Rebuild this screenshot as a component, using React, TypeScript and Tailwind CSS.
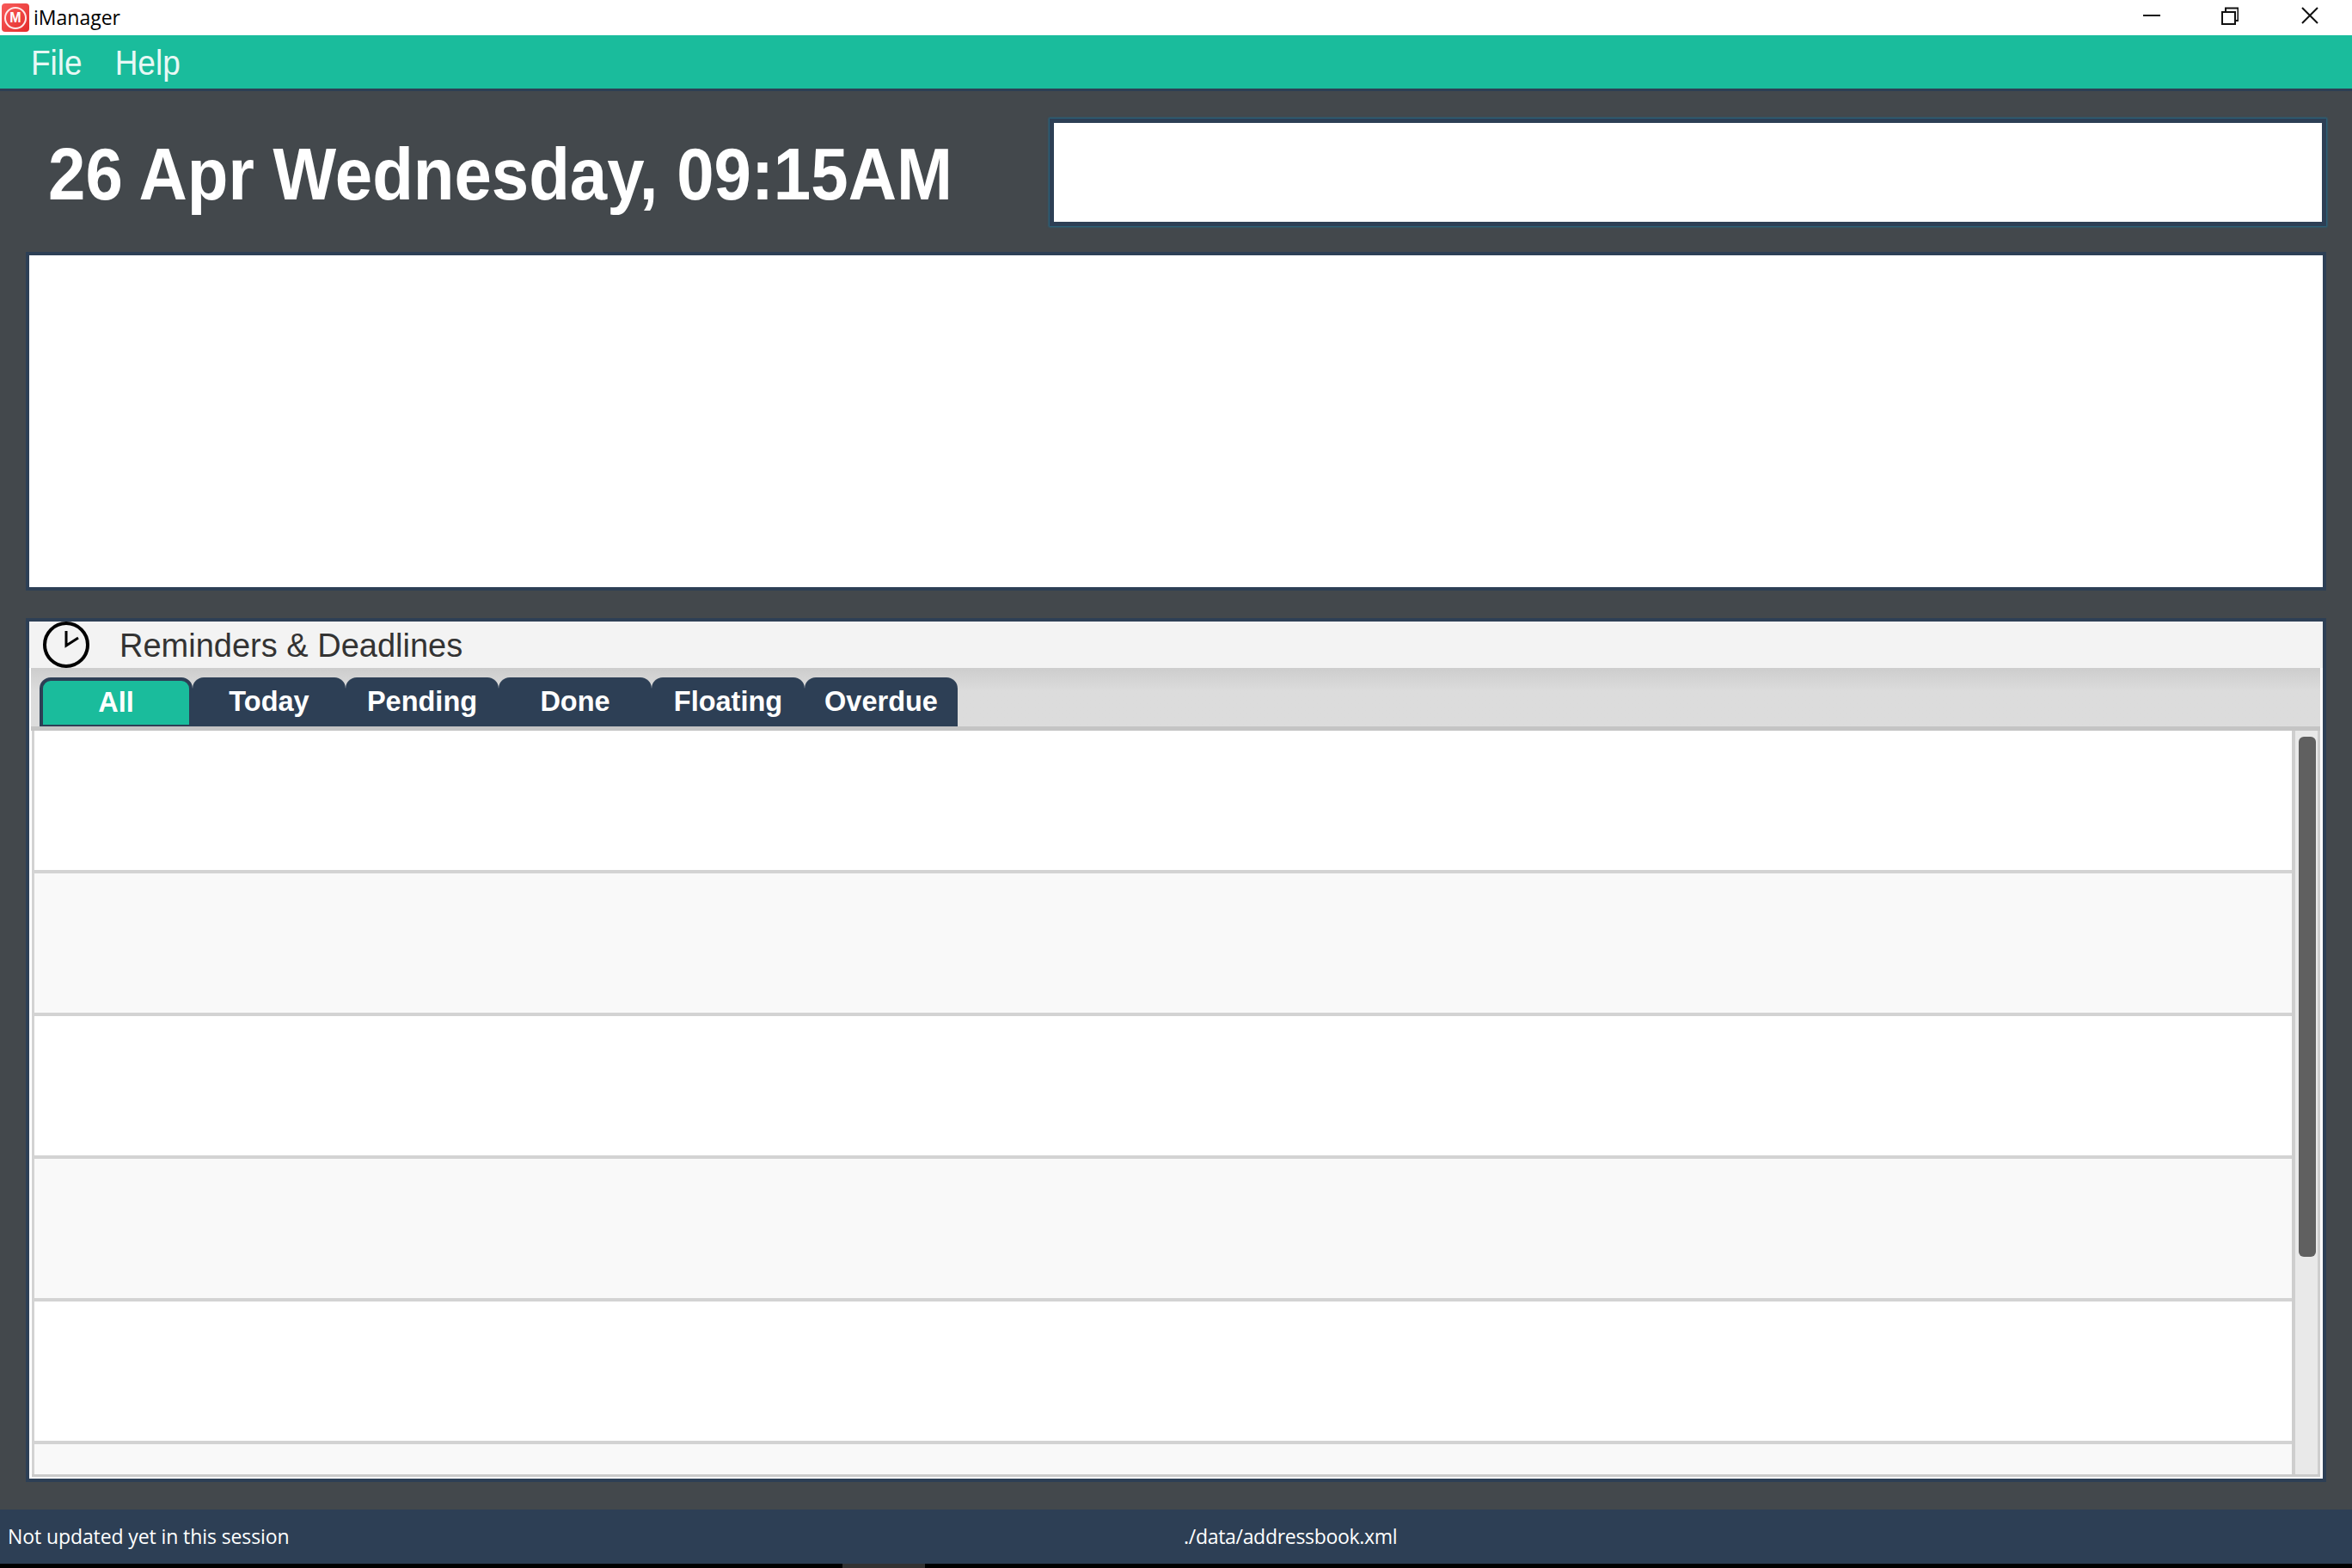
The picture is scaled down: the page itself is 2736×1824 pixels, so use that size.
import React from "react";

const tabs = ["All", "Today", "Pending", "Done", "Floating", "Overdue"];

function Row({ alt }: { alt: boolean }) {
  return <div className={`h-[166px] shrink-0 border-b-4 border-[#d3d3d3] ${alt ? "bg-[#f9f9f9]" : "bg-white"}`} />;
}

export default function App() {
  return (
    <div className="flex h-[1824px] w-[2736px] flex-col overflow-hidden bg-[#43484c] font-['Liberation_Sans',sans-serif]">
      {/* Window title bar */}
      <div className="flex h-[41px] shrink-0 items-center bg-white">
        <div className="ml-[2px] flex h-[33px] w-[32px] items-center justify-center rounded-[4px] bg-gradient-to-br from-[#f85a5a] to-[#e42a2a]">
          <div className="flex h-[26px] w-[26px] items-center justify-center rounded-full border-2 border-[#ffe9e9] text-[16px] font-bold leading-none text-white">
            M
          </div>
        </div>
        <div className="ml-[5px] font-['Open_Sans',sans-serif] text-[23px] leading-none text-black">iManager</div>
        <div className="ml-auto flex items-center pr-[39px]">
          <svg width="20" height="20" viewBox="0 0 20 20" className="mb-[5px]">
            <path d="M0 10h20" stroke="#111" strokeWidth="2" />
          </svg>
          <svg width="20" height="21" viewBox="0 0 20 21" className="mb-[5px] ml-[71px]">
            <path d="M1 6h15v14H1z M5 6V1.500h14.500V16H16" fill="none" stroke="#111" strokeWidth="2" />
          </svg>
          <svg width="20" height="20" viewBox="0 0 20 20" className="mb-[5px] ml-[73px]">
            <path d="M1 1l18 18M19 1L1 19" stroke="#111" strokeWidth="2" />
          </svg>
        </div>
      </div>

      {/* Menu bar */}
      <div className="flex h-[65px] shrink-0 items-start gap-[38px] border-b-[3px] border-[#2d3f55] bg-[#1abc9c] pl-[36px] pt-[11px] text-[37px] leading-[44px] text-[#e8f8f5]">
        <span className="scale-y-110">File</span>
        <span className="scale-y-110">Help</span>
      </div>

      {/* Main content */}
      <div className="flex min-h-0 flex-1 flex-col px-[30px]">
        <div className="flex h-[187px] shrink-0 items-start">
          <div className="w-[1191px] shrink-0 pl-[26px] pt-[41px] text-[78px] font-bold leading-[110px] text-white">
            <div className="origin-center scale-y-110 whitespace-nowrap">26 Apr Wednesday, 09:15AM</div>
          </div>
          <div className="mt-[32px] h-[125px] flex-1 border-[5px] border-[#2d3f55] bg-white shadow-[0_0_2px_1px_#1f6a8a]" />
        </div>

        <div className="h-[394px] shrink-0 border-4 border-[#2d3f55] bg-white" />

        <div className="mt-[32px] flex h-[1005px] shrink-0 flex-col border-4 border-[#2d3f55] bg-white">
          <div className="flex h-[54px] shrink-0 items-center bg-[#f3f3f3] pl-[15px]">
            <svg width="56" height="54" viewBox="0 0 56 54" className="shrink-0">
              <circle cx="28" cy="27" r="25" fill="none" stroke="#000" strokeWidth="4" />
              <path d="M28 11v17l14-9" fill="none" stroke="#000" strokeWidth="3" />
            </svg>
            <span className="ml-[34px] pt-[2px] text-[38px] leading-none text-[#333]">Reminders &amp; Deadlines</span>
          </div>

          <div className="flex min-h-0 flex-1 flex-col pb-[2px] pr-[3px]">
            <div className="ml-[2px] flex h-[73px] shrink-0 border-b-[5px] border-[#c4c4c4] bg-gradient-to-b from-[#cdcdcd] to-[#dcdcdc] to-40% pl-[10px] pt-[11px]">
              {tabs.map((t, i) => (
                <div
                  key={t}
                  className={`flex h-[57px] items-center justify-center rounded-t-[13px] border-[#2d3f55] text-[32.5px] font-bold leading-none text-white ${
                    i === 0 ? "w-[178px] border-x-4 border-t-4 border-b-2 bg-[#1abc9c]" : "w-[178px] bg-[#2d3f55]"
                  }`}
                >
                  {t}
                </div>
              ))}
            </div>

            <div className="ml-[3px] flex min-h-0 flex-1 border-b-[3px] border-[#cacaca]">
              <div className="flex min-w-0 flex-1 flex-col overflow-hidden border-l-[3px] border-[#d3d3d3]">
                <Row alt={false} />
                <Row alt={true} />
                <Row alt={false} />
                <Row alt={true} />
                <Row alt={false} />
                <div className="flex-1 bg-[#f9f9f9]" />
              </div>
              <div className="w-[33px] shrink-0 border-x-[3px] border-l-4 border-x-[#cecece] bg-[#e9e9e9] pl-[4px] pt-[7px]">
                <div className="h-[605px] w-[20px] rounded-[6px] bg-[#606060]" />
              </div>
            </div>
          </div>
        </div>
      </div>

      {/* Status bar */}
      <div className="flex h-[63px] shrink-0 items-center bg-[#2d3f55] pl-[9px] font-['Open_Sans',sans-serif] text-[23px] leading-none text-white">
        <span className="w-[1368px] shrink-0 tracking-[-0.1px]">Not updated yet in this session</span>
        <span className="tracking-[-0.3px]">./data/addressbook.xml</span>
      </div>

      {/* Desktop strip below the window */}
      <div className="flex h-[5px] shrink-0 bg-black pl-[980px]">
        <div className="h-full w-[96px] bg-[#333]" />
      </div>
    </div>
  );
}
